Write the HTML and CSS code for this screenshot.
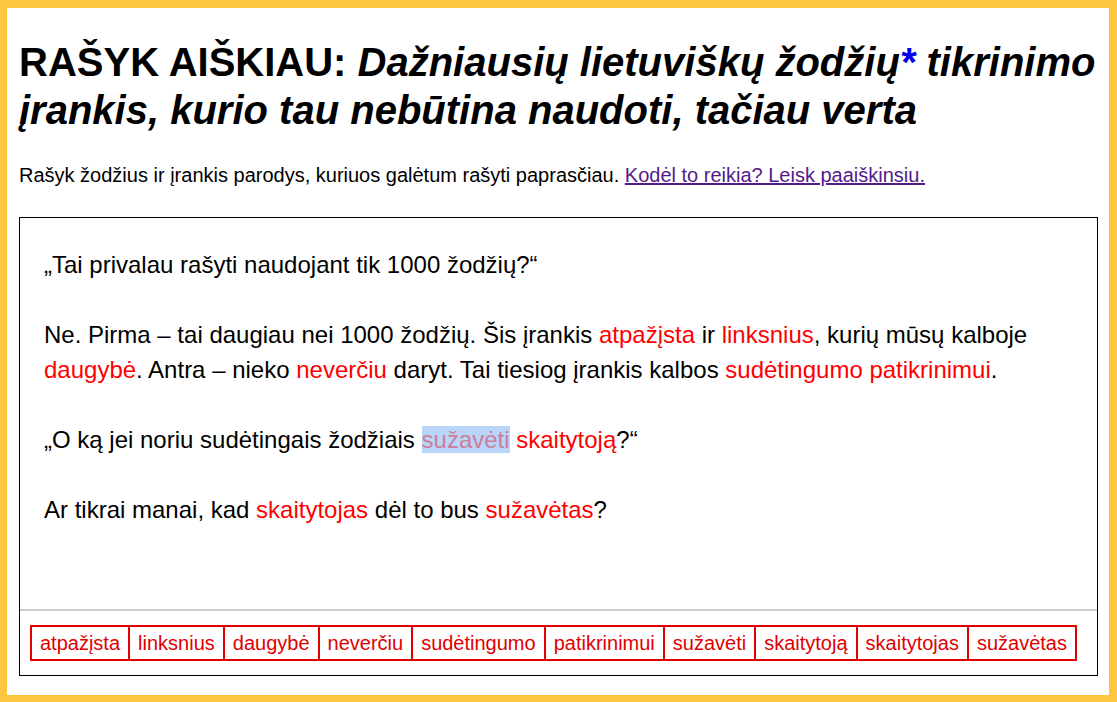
FILE: index.html
```html
<!DOCTYPE html>
<html lang="lt">
<head>
<meta charset="utf-8">
<title>Rašyk aiškiau</title>
<link rel="stylesheet" href="styles.css">
</head>
<body>
<div class="frame">
  <h1 class="title">RAŠYK AIŠKIAU: <em>Dažniausių lietuviškų žodžių<span class="star">*</span> tikrinimo įrankis, kurio tau nebūtina naudoti, tačiau verta</em></h1>
  <p class="lead">Rašyk žodžius ir įrankis parodys, kuriuos galėtum rašyti paprasčiau. <a href="#" class="why">Kodėl to reikia? Leisk paaiškinsiu.</a></p>
  <div class="box">
    <div class="editor">
      <p>„Tai privalau rašyti naudojant tik 1000 žodžių?“</p>
      <p>Ne. Pirma – tai daugiau nei 1000 žodžių. Šis įrankis <span class="hard">atpažįsta</span> ir <span class="hard">linksnius</span>, kurių mūsų kalboje <span class="hard">daugybė</span>. Antra – nieko <span class="hard">neverčiu</span> daryt. Tai tiesiog įrankis kalbos <span class="hard">sudėtingumo</span> <span class="hard">patikrinimui</span>.</p>
      <p>„O ką jei noriu sudėtingais žodžiais <span class="hard sel">sužavėti</span> <span class="hard">skaitytoją</span>?“</p>
      <p>Ar tikrai manai, kad <span class="hard">skaitytojas</span> dėl to bus <span class="hard">sužavėtas</span>?</p>
    </div>
    <div class="tags">
      <span class="tag">atpažįsta</span><span class="tag">linksnius</span><span class="tag">daugybė</span><span class="tag">neverčiu</span><span class="tag">sudėtingumo</span><span class="tag">patikrinimui</span><span class="tag">sužavėti</span><span class="tag">skaitytoją</span><span class="tag">skaitytojas</span><span class="tag">sužavėtas</span>
    </div>
  </div>
</div>
</body>
</html>
```

FILE: styles.css
```css
html, body {
  margin: 0;
  padding: 0;
  background: #ffffff;
}
body {
  font-family: "Liberation Sans", Arial, sans-serif;
  color: #000;
}
.frame {
  box-sizing: border-box;
  width: 1117px;
  height: 702px;
  border: 8px solid #fdc63f;
  border-left-width: 7px;
  border-bottom-width: 7px;
  padding: 0 11px 0 12px;
  display: flex;
  flex-direction: column;
}
.title {
  margin: 30px 0 0 0;
  font-size: 40px;
  line-height: 48px;
  font-weight: bold;
}
.title em {
  font-style: italic;
}
.star {
  color: #0000ee;
}
.lead {
  margin: 30px 0 0 0;
  font-size: 20px;
  line-height: 23px;
}
.why {
  color: #551a8b;
  text-decoration: underline;
}
.box {
  margin-top: 30px;
  height: 459px;
  box-sizing: border-box;
  border: 1px solid #000;
  display: flex;
  flex-direction: column;
  flex-shrink: 0;
}
.editor {
  flex: 1;
  padding: 29px 24px 0 24px;
  font-size: 24px;
  line-height: 35px;
  border-bottom: 2px solid #cccccc;
}
.editor p {
  margin: 0 0 35px 0;
}
.hard {
  color: #ff0000;
}
.sel {
  background: #b9d5f7;
  color: #cc7d9c;
}
.tags {
  display: flex;
  padding: 14px 10px 14px 10px;
}
.tag {
  display: block;
  border: 2px solid #e00000;
  margin-left: -2px;
  padding: 0 8px;
  height: 32px;
  line-height: 32px;
  font-size: 20px;
  color: #e00000;
}
.tag:first-child {
  margin-left: 0;
}
```
